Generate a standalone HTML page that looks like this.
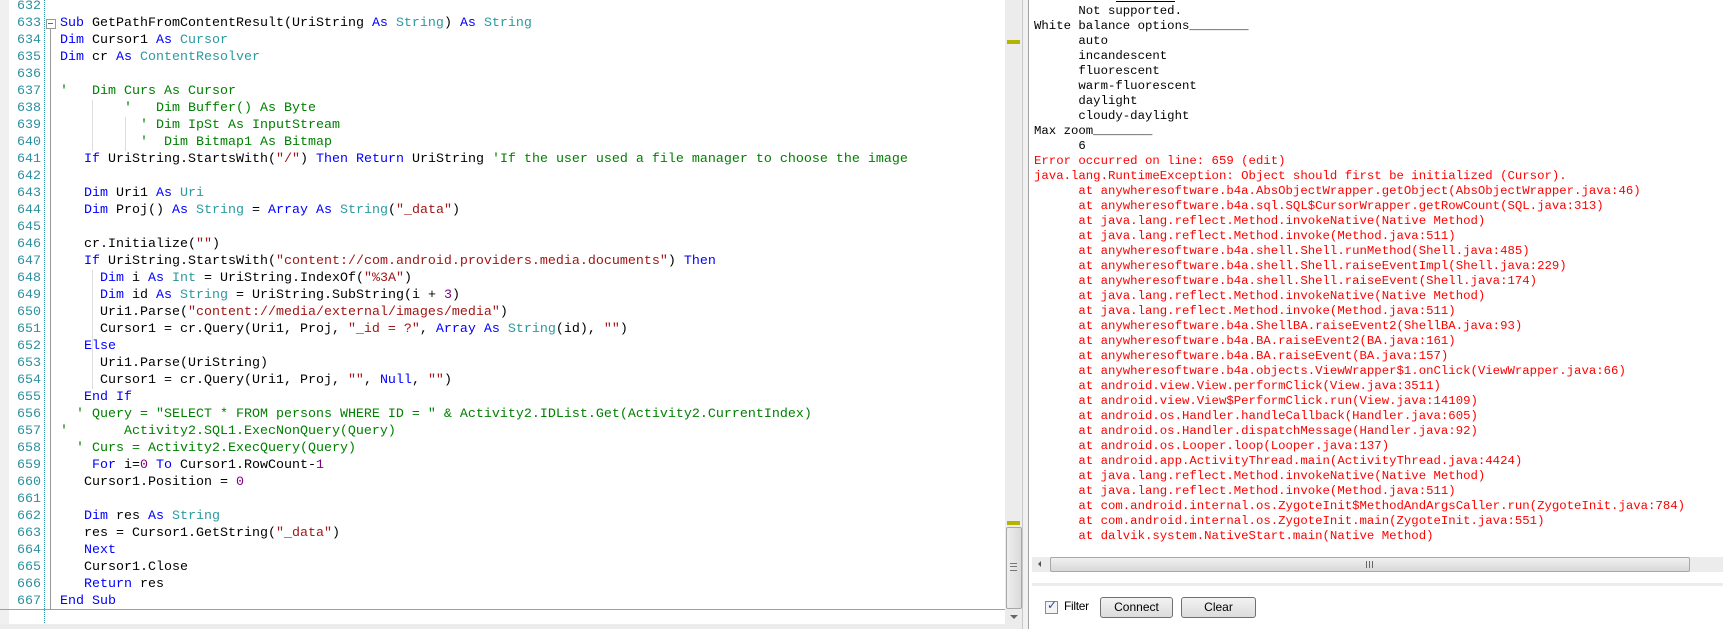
<!DOCTYPE html>
<html><head><meta charset="utf-8"><style>
body{margin:0;width:1723px;height:629px;overflow:hidden;background:#fff;position:relative;font-family:"Liberation Mono",monospace}
.abs{position:absolute}
pre{margin:0;font-family:"Liberation Mono",monospace}
#nums{left:0;top:-2px;width:41px;text-align:right;font-size:13.33px;line-height:17px;color:#2b8f9f}
#code{left:60px;top:-2px;font-size:13.33px;line-height:17px;color:#000}
.k{color:#0000ff}.t{color:#2b9aa0}.s{color:#a31515}.c{color:#008000}.n{color:#800080}
#out{left:1034px;top:-11px;font-size:12.33px;line-height:15px;color:#000}
.r{color:#f00}
.btn{position:absolute;height:19px;border:1px solid #707070;border-radius:3px;background:linear-gradient(#f2f2f2,#dcdcdc);font:12px "Liberation Sans",sans-serif;text-align:center;line-height:19px;color:#000}
</style></head><body>
<div class="abs" style="left:0;top:0;width:9px;height:625px;background:#f0f0f0"></div>
<div class="abs" style="left:44px;top:0;height:623px;border-left:1px dotted #2b8f9f"></div>
<div class="abs" style="left:46px;top:19px;width:8px;height:8px;border:1px solid #999;background:#fff"></div>
<div class="abs" style="left:48px;top:23px;width:5px;height:1px;background:#666"></div>
<div class="abs" style="left:50px;top:29px;width:1px;height:580px;background:#999"></div>
<div class="abs" style="left:92px;top:270px;width:1px;height:119px;background:#ddd"></div>
<div class="abs" style="left:92px;top:100px;width:1px;height:51px;background:#ddd"></div>
<div class="abs" style="left:125px;top:117px;width:1px;height:34px;background:#ddd"></div>
<pre id="nums" class="abs">632
633
634
635
636
637
638
639
640
641
642
643
644
645
646
647
648
649
650
651
652
653
654
655
656
657
658
659
660
661
662
663
664
665
666
667</pre>
<pre id="code" class="abs">&#32;
<span class="k">Sub</span> GetPathFromContentResult(UriString <span class="k">As</span> <span class="t">String</span>) <span class="k">As</span> <span class="t">String</span>
<span class="k">Dim</span> Cursor1 <span class="k">As</span> <span class="t">Cursor</span>
<span class="k">Dim</span> cr <span class="k">As</span> <span class="t">ContentResolver</span>

<span class="c">'   Dim Curs As Cursor</span>
        <span class="c">'   Dim Buffer() As Byte</span>
          <span class="c">' Dim IpSt As InputStream</span>
          <span class="c">'  Dim Bitmap1 As Bitmap</span>
   <span class="k">If</span> UriString.StartsWith(<span class="s">"/"</span>) <span class="k">Then</span> <span class="k">Return</span> UriString <span class="c">'If the user used a file manager to choose the image</span>

   <span class="k">Dim</span> Uri1 <span class="k">As</span> <span class="t">Uri</span>
   <span class="k">Dim</span> Proj() <span class="k">As</span> <span class="t">String</span> = <span class="k">Array</span> <span class="k">As</span> <span class="t">String</span>(<span class="s">"_data"</span>)

   cr.Initialize(<span class="s">""</span>)
   <span class="k">If</span> UriString.StartsWith(<span class="s">"content://com.android.providers.media.documents"</span>) <span class="k">Then</span>
     <span class="k">Dim</span> i <span class="k">As</span> <span class="t">Int</span> = UriString.IndexOf(<span class="s">"%3A"</span>)
     <span class="k">Dim</span> id <span class="k">As</span> <span class="t">String</span> = UriString.SubString(i + <span class="n">3</span>)
     Uri1.Parse(<span class="s">"content://media/external/images/media"</span>)
     Cursor1 = cr.Query(Uri1, Proj, <span class="s">"_id = ?"</span>, <span class="k">Array</span> <span class="k">As</span> <span class="t">String</span>(id), <span class="s">""</span>)
   <span class="k">Else</span>
     Uri1.Parse(UriString)
     Cursor1 = cr.Query(Uri1, Proj, <span class="s">""</span>, <span class="k">Null</span>, <span class="s">""</span>)
   <span class="k">End If</span>
  <span class="c">' Query = "SELECT * FROM persons WHERE ID = " &amp; Activity2.IDList.Get(Activity2.CurrentIndex)</span>
<span class="c">'       Activity2.SQL1.ExecNonQuery(Query)</span>
  <span class="c">' Curs = Activity2.ExecQuery(Query)</span>
    <span class="k">For</span> i=<span class="n">0</span> <span class="k">To</span> Cursor1.RowCount-<span class="n">1</span>
   Cursor1.Position = <span class="n">0</span>

   <span class="k">Dim</span> res <span class="k">As</span> <span class="t">String</span>
   res = Cursor1.GetString(<span class="s">"_data"</span>)
   <span class="k">Next</span>
   Cursor1.Close
   <span class="k">Return</span> res
<span class="k">End Sub</span></pre>
<div class="abs" style="left:0;top:609px;width:1005px;height:1px;background:#a0a0a0"></div>
<div class="abs" style="left:0;top:624px;width:1028px;height:5px;background:#ececec"></div>
<!-- code vscroll -->
<div class="abs" style="left:1005px;top:0;width:17px;height:629px;background:#ececec"></div>
<div class="abs" style="left:1007px;top:40px;width:13px;height:4px;background:#b4b400"></div>
<div class="abs" style="left:1007px;top:521px;width:13px;height:4px;background:#b4b400"></div>
<div class="abs" style="left:1006px;top:527px;width:14px;height:80px;border:1px solid #a8a8a8;border-radius:2px;background:linear-gradient(90deg,#eee,#dadada)"></div>
<div class="abs" style="left:1010px;top:563px;width:7px;height:6px;border-top:1px solid #777;border-bottom:1px solid #777"></div>
<div class="abs" style="left:1010px;top:566px;width:7px;height:1px;background:#777"></div>
<div class="abs" style="left:1010px;top:615px;width:0;height:0;border-left:4px solid transparent;border-right:4px solid transparent;border-top:4px solid #666"></div>
<div class="abs" style="left:1022px;top:0;width:1px;height:629px;background:#c8c8c8"></div>
<div class="abs" style="left:1023px;top:0;width:5px;height:629px;background:#f0f0f0"></div>
<div class="abs" style="left:1028px;top:0;width:1px;height:629px;background:#a0a0a0"></div>
<div class="abs" style="left:1116px;top:1px;width:59px;height:1px;background:#000"></div>
<pre id="out" class="abs">&#32;
      Not supported.
White balance options________
      auto
      incandescent
      fluorescent
      warm-fluorescent
      daylight
      cloudy-daylight
Max zoom________
      6
<span class="r">Error occurred on line: 659 (edit)
java.lang.RuntimeException: Object should first be initialized (Cursor).
      at anywheresoftware.b4a.AbsObjectWrapper.getObject(AbsObjectWrapper.java:46)
      at anywheresoftware.b4a.sql.SQL$CursorWrapper.getRowCount(SQL.java:313)
      at java.lang.reflect.Method.invokeNative(Native Method)
      at java.lang.reflect.Method.invoke(Method.java:511)
      at anywheresoftware.b4a.shell.Shell.runMethod(Shell.java:485)
      at anywheresoftware.b4a.shell.Shell.raiseEventImpl(Shell.java:229)
      at anywheresoftware.b4a.shell.Shell.raiseEvent(Shell.java:174)
      at java.lang.reflect.Method.invokeNative(Native Method)
      at java.lang.reflect.Method.invoke(Method.java:511)
      at anywheresoftware.b4a.ShellBA.raiseEvent2(ShellBA.java:93)
      at anywheresoftware.b4a.BA.raiseEvent2(BA.java:161)
      at anywheresoftware.b4a.BA.raiseEvent(BA.java:157)
      at anywheresoftware.b4a.objects.ViewWrapper$1.onClick(ViewWrapper.java:66)
      at android.view.View.performClick(View.java:3511)
      at android.view.View$PerformClick.run(View.java:14109)
      at android.os.Handler.handleCallback(Handler.java:605)
      at android.os.Handler.dispatchMessage(Handler.java:92)
      at android.os.Looper.loop(Looper.java:137)
      at android.app.ActivityThread.main(ActivityThread.java:4424)
      at java.lang.reflect.Method.invokeNative(Native Method)
      at java.lang.reflect.Method.invoke(Method.java:511)
      at com.android.internal.os.ZygoteInit$MethodAndArgsCaller.run(ZygoteInit.java:784)
      at com.android.internal.os.ZygoteInit.main(ZygoteInit.java:551)
      at dalvik.system.NativeStart.main(Native Method)</span></pre>
<!-- hscroll -->
<div class="abs" style="left:1032px;top:557px;width:691px;height:15px;background:#ececec"></div>
<div class="abs" style="left:1038px;top:561px;width:0;height:0;border-top:3px solid transparent;border-bottom:3px solid transparent;border-right:3px solid #555"></div>
<div class="abs" style="left:1050px;top:557px;width:638px;height:13px;border:1px solid #a8a8a8;border-radius:2px;background:linear-gradient(#f0f0f0,#d8d8d8)"></div>
<div class="abs" style="left:1366px;top:561px;width:1px;height:7px;background:#666;box-shadow:3px 0 #666,6px 0 #666"></div>
<div class="abs" style="left:1032px;top:583px;width:691px;height:3px;background:#ececec"></div>
<!-- controls -->
<div class="abs" style="left:1045px;top:601px;width:11px;height:11px;border:1px solid #8a8a8a;background:#f4f4f4"></div>
<div class="abs" style="left:1047px;top:598px;font:bold 12px 'DejaVu Sans',sans-serif;color:#2a4a9a">✓</div>
<div class="abs" style="left:1064px;top:599px;font:12px 'Liberation Sans',sans-serif;letter-spacing:-0.3px">Filter</div>
<div class="btn" style="left:1100px;top:597px;width:71px">Connect</div>
<div class="btn" style="left:1181px;top:597px;width:73px">Clear</div>
</body></html>
